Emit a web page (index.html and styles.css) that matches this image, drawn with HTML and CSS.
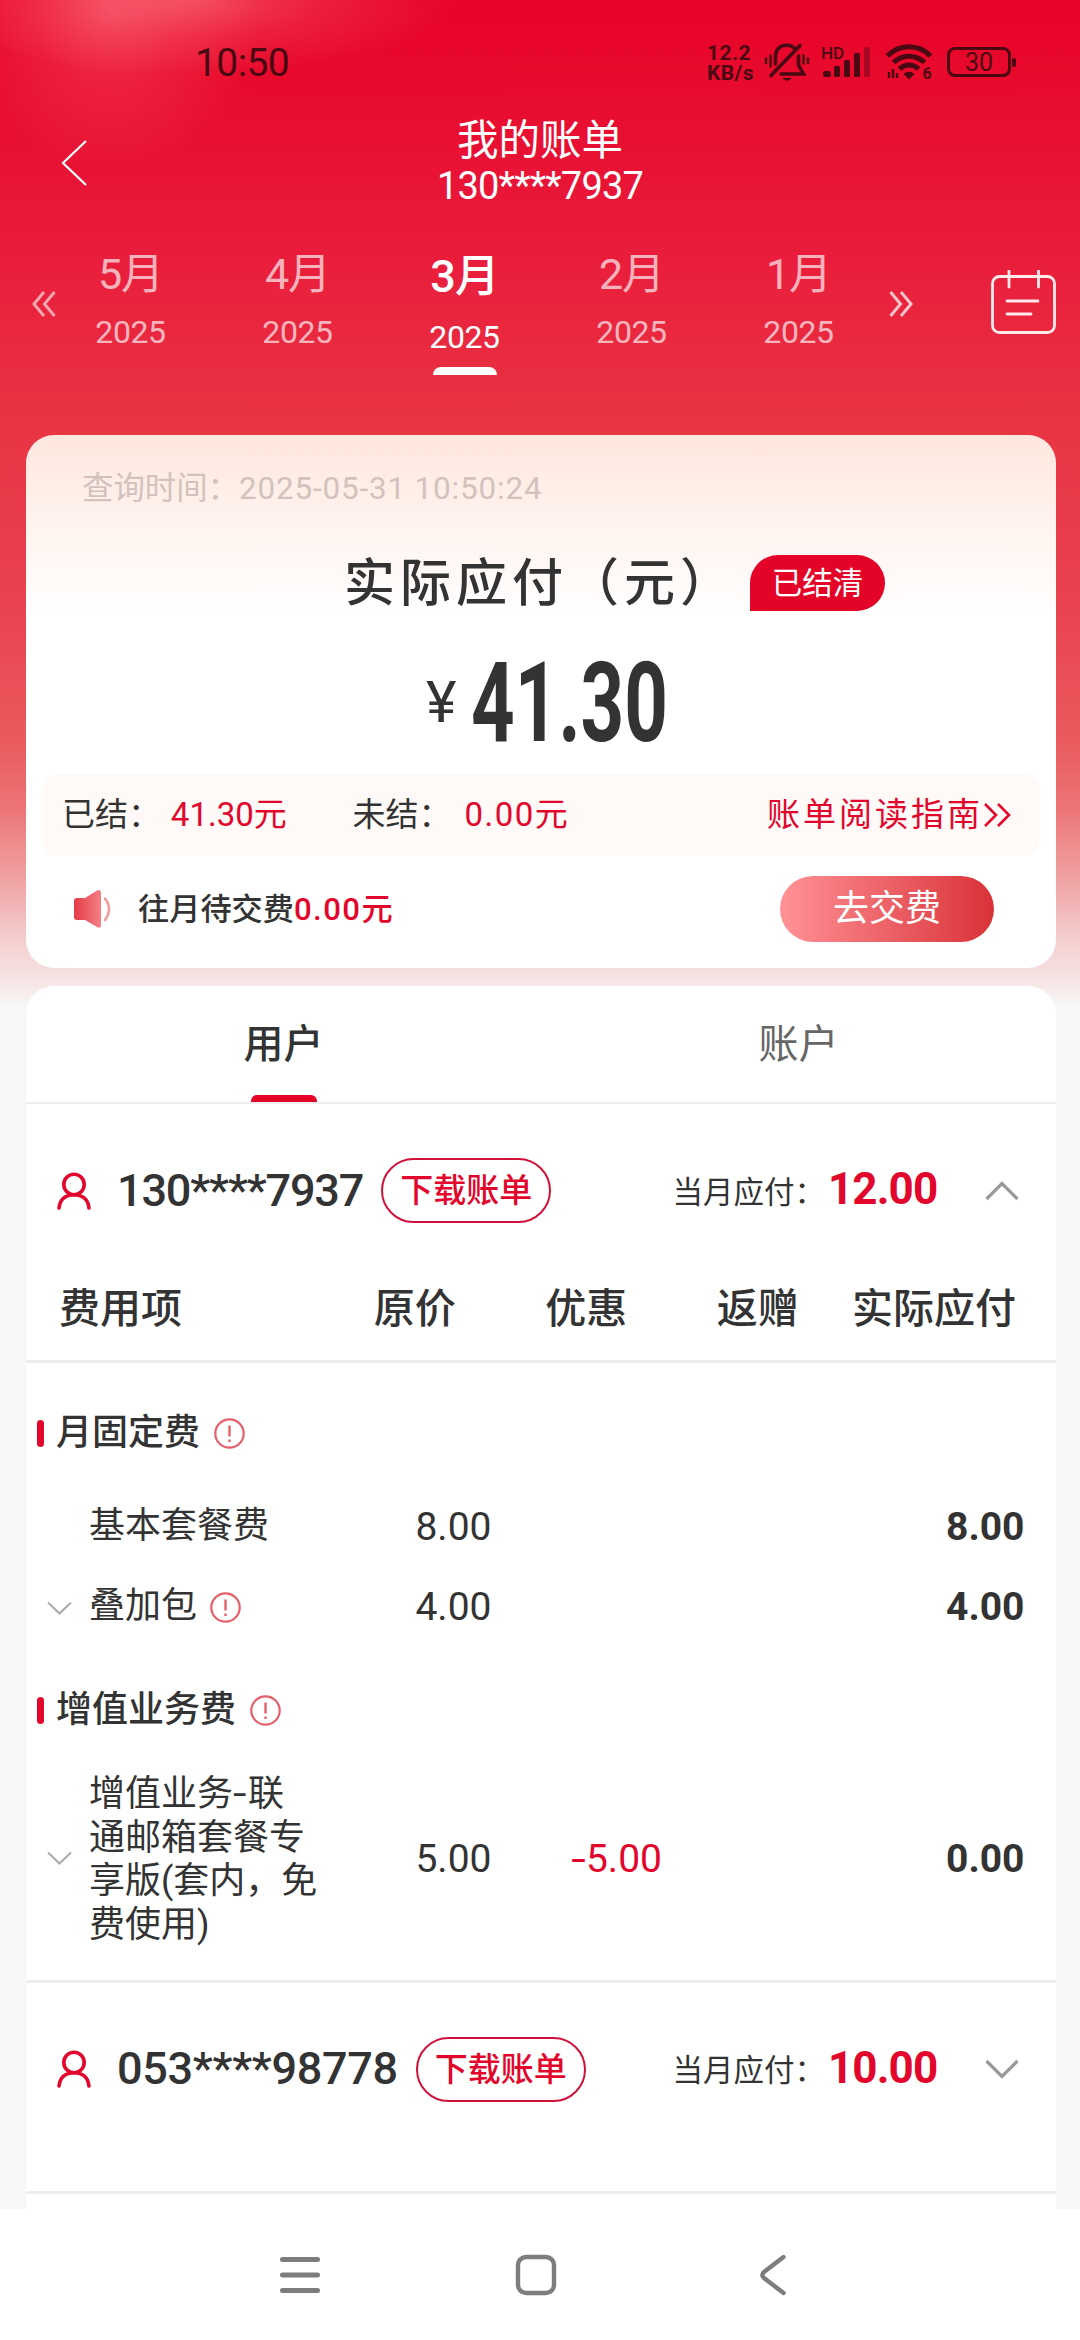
FILE: index.html
```html
<!DOCTYPE html>
<html lang="zh-CN">
<head>
<meta charset="utf-8">
<title>我的账单</title>
<link rel="stylesheet" href="styles.css">
</head>
<body>
<svg class="defs" width="0" height="0">
  <symbol id="person" viewBox="0 0 34 38"><g fill="none" stroke="#e2062c" stroke-width="3.6" stroke-linecap="round"><circle cx="17" cy="12.5" r="10.2"/><path d="M2 36C3 27 9 22.700 17 22.700S31 27 32 36"/></g></symbol>
  <symbol id="info" viewBox="0 0 31 31"><circle cx="15.500" cy="15.500" r="14.200" fill="none" stroke="#e4616b" stroke-width="2.200"/><path d="M15.500 7.500V18.500M15.500 21.500V24" stroke="#e4616b" stroke-width="2.400"/></symbol>
  <symbol id="down" viewBox="0 0 34 20"><path d="M1.500 2L17 17.500L32.500 2" fill="none" stroke="#999" stroke-width="3.200"/></symbol>
  <symbol id="small-down" viewBox="0 0 25 15"><path d="M1 1.500L12.500 12.500L24 1.500" fill="none" stroke="#aaa" stroke-width="2"/></symbol>
</svg>
<div class="app">
  <div class="status">
    <span class="clock">10:50</span>
    <span class="rate"><span>12.2</span><span>KB/s</span></span>
    <svg class="bell" width="46" height="40" viewBox="0 0 46 40"><g fill="none" stroke="#4a0812" stroke-width="3.600" stroke-linecap="round"><path d="M7 33.500L36 3.500"/><path d="M11.500 22V15C11.500 7 16.500 3.300 22.500 3.300C26 3.300 28.500 4.300 30.500 6.200"/><path d="M34.500 14V23L39.500 32H17"/></g><path d="M18 36H28Q23 41.500 18 36Z" fill="#4a0812"/><path d="M2 15.500V22M6.500 12.500V25.500M39.500 12.500V22.500M44 15.500V22" stroke="#4a0812" stroke-width="2.400"/></svg>
    <span class="signal"><b>HD</b>
      <svg width="50" height="32" viewBox="0 0 50 32"><g fill="#4a0812"><rect x="1" y="25" width="8" height="6" rx="2"/><rect x="12" y="20" width="6" height="11" rx="1.500"/><rect x="22" y="14" width="6" height="17" rx="1.500"/><rect x="32" y="7" width="6" height="24" rx="1.500"/></g><rect x="42" y="1" width="6" height="30" rx="1.500" fill="#a90724"/></svg></span>
    <svg class="wifi" width="46" height="36" viewBox="0 0 46 36"><g fill="none" stroke="#4a0812" stroke-width="5"><path d="M1.500 12C13-.5 33-.5 44.500 12"/><path d="M7.500 18.500C16 10 30 10 38.500 18.500"/><path d="M13.500 25C19 19.800 27 19.800 32.500 25"/></g><path d="M17.500 30Q23 25.500 28.500 30L23 35.500Z" fill="#4a0812"/><path d="M3 28V34M7 25V34M11 29V34" stroke="#4a0812" stroke-width="2.400"/><text x="36.500" y="35" class="wifi-gen">6</text></svg>
    <span class="battery">30</span>
  </div>

  <div class="titlebar">
    <svg class="back" width="26" height="46" viewBox="0 0 26 46"><path d="M25 1L2 23L25 45" fill="none" stroke="#fff" stroke-width="2.200"/></svg>
    <div class="title"><div class="title-main">我的账单</div><div class="title-phone">130****7937</div></div>
  </div>

  <div class="months">
    <svg class="prev" width="24" height="26" viewBox="0 0 24 26"><path d="M12 1L2 13L12 25M22.500 1L12.500 13L22.500 25" fill="none" stroke="#f7a5ad" stroke-width="3"/></svg>
    <div class="month"><span class="m">5月</span><span class="y">2025</span></div>
    <div class="month"><span class="m">4月</span><span class="y">2025</span></div>
    <div class="month on"><span class="m">3月</span><span class="y">2025</span></div>
    <div class="month"><span class="m">2月</span><span class="y">2025</span></div>
    <div class="month"><span class="m">1月</span><span class="y">2025</span></div>
    <svg class="next" width="24" height="26" viewBox="0 0 24 26"><path d="M1.500 1L11.500 13L1.500 25M12 1L22 13L12 25" fill="none" stroke="#fbc4c9" stroke-width="3"/></svg>
    <svg class="calendar" width="65" height="64" viewBox="0 0 65 64"><g fill="none" stroke="#ffe9eb" stroke-width="2.800"><rect x="1.500" y="6.500" width="62" height="56" rx="7"/><path d="M18 1V17M47.500 1V17M16 31H47M16 44H40" stroke-linecap="round"/></g></svg>
  </div>

  <section class="card summary">
    <div class="query"><span>查询时间：</span><span class="query-time">2025-05-31 10:50:24</span></div>
    <div class="heading"><span class="heading-text">实际应付（元）</span><span class="settled">已结清</span></div>
    <div class="amount"><span class="yen">¥</span><span class="sum"><span class="sum-num">41.30</span></span></div>
    <div class="strip">
      <span class="s1">已结：</span><span class="s2 red">41.30元</span><span class="s3">未结：</span><span class="s4 red">0.00元</span>
      <span class="guide red">账单阅读指南</span>
      <svg width="28" height="26" viewBox="0 0 28 26"><path d="M2 2L13 13L2 24M15 2L26 13L15 24" fill="none" stroke="#e2062c" stroke-width="2.600"/></svg>
    </div>
    <div class="notice">
      <svg width="39" height="40" viewBox="0 0 39 40"><defs><linearGradient id="spk"><stop offset="0" stop-color="#e33b46"/><stop offset="1" stop-color="#f58085"/></linearGradient></defs><path d="M4 9H12L24 1.500Q28 0 28 4V36Q28 40 24 38L12 31H4Q1 31 1 28V12Q1 9 4 9Z" fill="url(#spk)"/><path d="M32 9.500Q40 20 32 31" fill="none" stroke="#f29a9e" stroke-width="2.600" stroke-linecap="round"/></svg>
      <span class="notice-text">往月待交费<b class="red">0.00元</b></span>
      <span class="pay">去交费</span>
    </div>
  </section>

  <section class="card detail">
    <div class="tabs"><div class="tab on">用户</div><div class="tab">账户</div></div>
    <div class="user">
      <svg class="person" width="34" height="38"><use href="#person"/></svg>
      <span class="phone">130****7937</span><span class="download">下载账单</span>
      <span class="due">当月应付：</span><span class="due-sum">12.00</span>
      <svg class="arrow up" width="34" height="20"><use href="#down"/></svg>
    </div>
    <div class="grid head"><span class="first">费用项</span><span>原价</span><span>优惠</span><span>返赠</span><span>实际应付</span></div>
    <div class="group g1"><i></i><span>月固定费</span><svg width="31" height="31"><use href="#info"/></svg></div>
    <div class="grid item i1"><div class="name"><em></em><span>基本套餐费</span></div><span class="num">8.00</span><span></span><span></span><b class="num last">8.00</b></div>
    <div class="grid item i2"><div class="name"><em><svg width="25" height="15"><use href="#small-down"/></svg></em><span>叠加包</span><svg class="info" width="31" height="31"><use href="#info"/></svg></div><span class="num">4.00</span><span></span><span></span><b class="num last">4.00</b></div>
    <div class="group g2"><i></i><span>增值业务费</span><svg width="31" height="31"><use href="#info"/></svg></div>
    <div class="grid item i3"><div class="name"><em><svg width="25" height="15"><use href="#small-down"/></svg></em><span>增值业务<span class="dash">-</span>联<br>通邮箱套餐专<br>享版(套内，免<br>费使用)</span></div><span class="num">5.00</span><span class="num off red"><span class="dash">-</span>5.00</span><span></span><b class="num last">0.00</b></div>
    <div class="user second">
      <svg class="person" width="34" height="38"><use href="#person"/></svg>
      <span class="phone">053****98778</span><span class="download">下载账单</span>
      <span class="due">当月应付：</span><span class="due-sum">10.00</span>
      <svg class="arrow" width="34" height="20"><use href="#down"/></svg>
    </div>
  </section>

  <nav class="sysnav">
    <svg width="40" height="42" viewBox="0 0 40 42"><path d="M2.500 5.500H37.500M2.500 21H37.500M2.500 36.500H37.500" stroke="#7d7d7d" stroke-width="5" stroke-linecap="round"/></svg>
    <svg width="42" height="42" viewBox="0 0 42 42"><rect x="3" y="3" width="36" height="36" rx="8" fill="none" stroke="#7d7d7d" stroke-width="4.400"/></svg>
    <svg class="nav-back" width="28" height="42" viewBox="0 0 28 42"><path d="M24.500 3L5 18Q1.500 21 5 24L24.500 39" fill="none" stroke="#7d7d7d" stroke-width="4.400" stroke-linecap="round"/></svg>
  </nav>
</div>
</body>
</html>
```

FILE: styles.css
```css
* { box-sizing: border-box; margin: 0; padding: 0; }
body { width: 1080px; font-family: Roboto, "Noto Sans CJK SC", sans-serif; color: #333; white-space: nowrap; line-height: 1.2; }
.defs { display: block; height: 0; }
svg { display: block; flex: none; }
.red { color: #e2062c; }
.app {
  width: 1080px; height: 2340px; overflow: hidden; display: flex; flex-direction: column;
  background:
    radial-gradient(ellipse 270px 75px at 190px 0, rgba(255,150,150,.45), rgba(255,130,135,.2) 50%, transparent),
    radial-gradient(ellipse 150px 160px at 110px 10px, rgba(255,130,140,.42), rgba(255,110,120,.2) 50%, transparent),
    linear-gradient(#e80329 0, #e80a2c 80px, #e9193a 230px, #e93443 420px, #e94250 600px, #ea5a5c 740px, #ec7577 810px, #f0a3a4 880px, #f4d2d2 945px, #f6e3e3 980px, #f7f7f7 1006px);
}

.status { height: 116px; padding: 8px 65px 0 195px; display: flex; align-items: center; color: #4a0812; flex: none; }
.clock { font-size: 39px; width: 512px; letter-spacing: -.6px; padding-top: 2px; }
.rate { display: flex; flex-direction: column; font-size: 21px; font-weight: 700; line-height: 20px; width: 57px; letter-spacing: .4px; padding-top: 2px; }
.signal { width: 52px; margin-left: 12px; height: 32px; display: grid; }
.signal b { grid-area: 1 / 1; font-size: 17px; line-height: 14px; margin-left: -1px; font-weight: 500; }
.signal svg { grid-area: 1 / 1; }
.wifi { margin-left: 12px; overflow: visible; }
.wifi-gen { font-size: 16px; font-weight: 700; fill: #4a0812; }
.battery { position: relative; margin-left: 15px; width: 64px; height: 30px; border: 3px solid #4a0812; border-radius: 8px; text-align: center; font-size: 25px; line-height: 25px; font-weight: 400; }
.battery::after { content: ""; position: absolute; left: 62px; top: 8px; width: 4px; height: 9px; background: #4a0812; border-radius: 2px; }

.titlebar { height: 92px; display: grid; grid-template-columns: 120px 1fr 120px; align-items: center; color: #fff; flex: none; }
.back { margin-left: 61px; }
.title { text-align: center; line-height: 46px; }
.title-main { font-size: 41.500px; padding-top: 2px; height: 46px; }
.title-phone { font-size: 38px; letter-spacing: -.8px; padding-top: 1px; }

.months { height: 227px; padding: 39px 24px 0 32px; display: flex; flex: none; color: rgba(255,255,255,.68); }
.prev, .next { margin-top: 44px; }
.prev { margin-right: -9px; }
.next { margin-left: 7px; }
.calendar { margin: 23px 0 0 78px; }
.month { width: 167.300px; display: flex; flex-direction: column; align-items: center; }
.m { font-size: 43px; line-height: 55px; letter-spacing: -1px; }
.y { font-size: 32px; line-height: 32px; margin-top: 14px; letter-spacing: -.4px; }
.month.on { color: #fff; }
.on .m { font-size: 45px; font-weight: 500; line-height: 60px; }
.on .y { margin-top: 14px; }
.month.on::after { content: ""; width: 64px; height: 8px; margin-top: 14px; background: #fff; border-radius: 8px 8px 0 0; }

.card { width: 1030px; margin-left: 26px; flex: none; background: #fff; }
.summary { height: 533px; border-radius: 28px; background: linear-gradient(#ffe7de, #fff 180px); }
.query { padding: 33px 0 0 56px; font-size: 31.400px; line-height: 42px; color: #d2c2bd; display: flex; }
.query-time { letter-spacing: .85px; }
.heading { height: 56px; margin-top: 45px; padding-left: 318px; display: flex; align-items: center; }
.heading-text { font-size: 51px; letter-spacing: 5px; width: 406px; font-weight: 500; padding-top: 2px; }
.settled { width: 135px; height: 56px; line-height: 57px; border-radius: 28px 28px 28px 0; background: #e40428; color: #fff; text-align: center; font-size: 30.500px; }
.amount { height: 100px; margin-top: 40px; padding-left: 400px; display: flex; }
.yen { width: 45px; font-size: 58px; line-height: 102px; }
.sum { width: 195px; }
.sum-num { display: block; width: 300px; font-size: 112px; font-weight: 700; line-height: 103px; transform: scaleX(.68); transform-origin: 0 50%; }
.strip { margin: 23px 17px 0; height: 82px; padding: 0 28px 0 19px; background: #fffaf7; border-radius: 14px; display: flex; align-items: center; font-size: 33px; }
.s1 { width: 109px; } .s2 { width: 182px; } .s3 { width: 112px; } .s4 { width: 303px; letter-spacing: 1.500px; }
.guide { letter-spacing: 3px; width: 216px; }
.notice { margin-top: 20px; height: 66px; padding: 0 62px 0 47px; display: flex; align-items: center; }
.notice-text { margin-left: 26px; font-size: 31.200px; flex: 1; font-weight: 500; padding-top: 1px; }
.notice b { font-weight: 500; letter-spacing: 1.400px; }
.pay { width: 214px; height: 66px; line-height: 67px; border-radius: 33px; text-align: center; color: #fff; font-size: 36px; background: linear-gradient(90deg, #ff9296, #d93238); }

.detail { margin-top: 18px; border-radius: 28px 28px 0 0; height: 1223px; overflow: hidden; }
.tabs { height: 118px; display: flex; border-bottom: 2px solid #eee; }
.tab { width: 50%; text-align: center; font-size: 40px; line-height: 118px; color: #666; height: 116px; }
.tab.on { color: #333; font-weight: 500; }
.tab.on::after { content: ""; display: block; width: 66px; height: 7px; margin: -9px auto 0; background: #e40428; border-radius: 6px 6px 0 0; }
.user { height: 173px; padding: 0 37px 0 31px; display: flex; align-items: center; }
.phone { font-size: 45px; font-weight: 500; margin: 0 18px 0 26px; letter-spacing: -1.150px; }
.second .phone { letter-spacing: -.3px; }
.download { width: 170px; height: 65px; border: 2px solid #d0123a; border-radius: 33px; color: #e2062c; font-size: 33px; line-height: 62px; text-align: center; font-weight: 500; }
.due { margin-left: auto; font-size: 30.500px; line-height: 40px; padding-top: 4px; }
.due-sum { width: 110px; font-size: 44px; font-weight: 700; color: #e2062c; margin: -2px 47px 0 3px; letter-spacing: -.9px; }
.up { transform: rotate(180deg); }
.grid { display: grid; grid-template-columns: 303px 171.500px 171.500px 171.500px 181px; align-items: center; }
.head { height: 86px; padding-bottom: 18px; border-bottom: 3px solid #eee; font-size: 41px; font-weight: 500; text-align: center; }
.head .first { text-align: left; padding-left: 33px; }
.group { display: flex; align-items: center; padding-left: 11px; font-size: 36px; font-weight: 500; height: 60px; }
.group span { padding-top: 2px; }
.group i { width: 7px; height: 27px; border-radius: 4px; background: #e2062c; margin-right: 12px; }
.group svg { margin-left: 14px; }
.g1 { margin-top: 40px; }
.item { height: 80px; font-size: 36px; }
.i1 { margin-top: 24px; }
.g2 { margin-top: 33px; }
.i3 { height: 174px; margin-top: 33px; line-height: 43.500px; }
.name { display: flex; align-items: center; }
.name em { width: 25px; margin: 0 17px 0 21px; padding-top: 2px; }
.i3 em { padding: 0 0 4px; }
.info { margin-left: 13px; }
.num { font-size: 39px; text-align: right; padding-right: 9px; }
.off { padding-right: 10px; }
.dash { display: inline-block; transform: scaleX(1.350); transform-origin: 100% 50%; }
.name .dash { transform-origin: 0 50%; margin-right: 5px; }
.last { font-weight: 700; padding-right: 0; }
.second { margin-top: 33px; height: 214px; padding-bottom: 36px; border-top: 3px solid #eee; border-bottom: 3px solid #eee; }
.sysnav { height: 131px; background: #fff; padding-left: 280px; display: flex; align-items: center; flex: none; }
.sysnav svg { margin-right: 195px; }
.sysnav .nav-back { margin: 0 0 0 7px; }
```
